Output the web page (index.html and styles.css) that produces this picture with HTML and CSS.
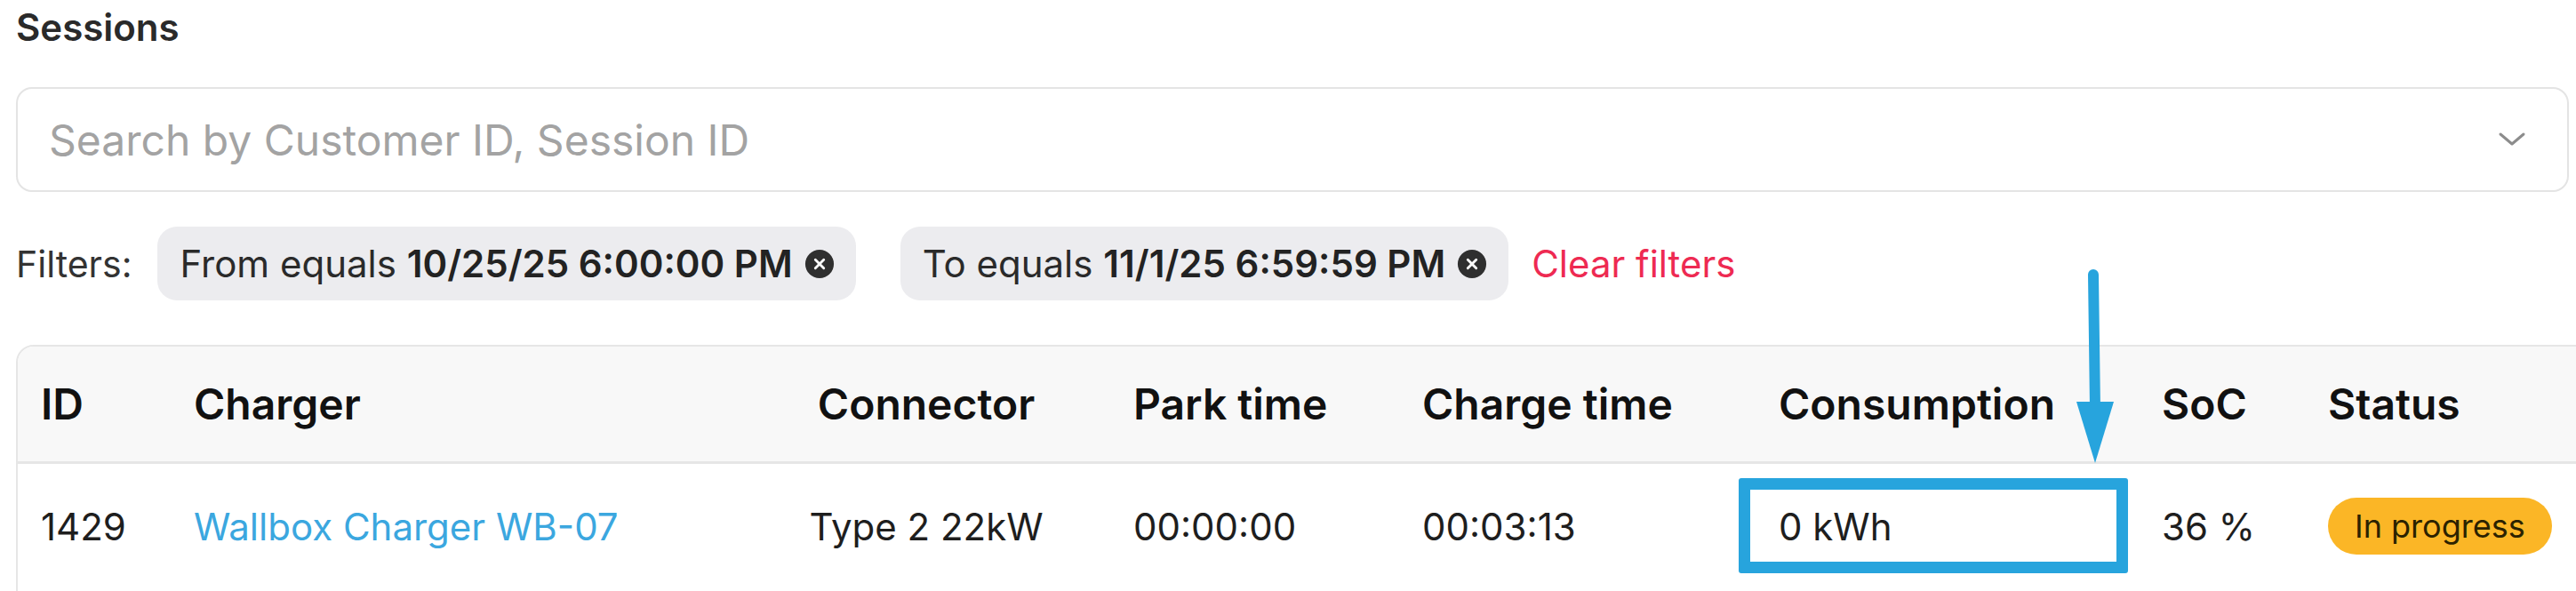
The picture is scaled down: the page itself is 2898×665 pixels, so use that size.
FILE: index.html
```html
<!DOCTYPE html>
<html lang="en">
<head>
    <meta charset="UTF-8">
    <meta name="viewport" content="width=device-width, initial-scale=1.0">
    <link rel="stylesheet" href="styles.css">
    <title>Sessions</title>
</head>
<body>
    <div class="page">
        <h1 class="page-title">Sessions</h1>

        <div class="search">
            <span class="search-placeholder">Search by Customer ID, Session ID</span>
            <svg class="search-chevron" width="32" height="18" viewBox="0 0 32 18">
                <path d="M3 3 L16 14 L29 3" fill="none" stroke="#8c8c8c" stroke-width="3" stroke-linecap="round" stroke-linejoin="round"/>
            </svg>
        </div>

        <div class="filters">
            <span class="filters-label">Filters:</span>
            <span class="chip">From equals <b>10/25/25 6:00:00 PM</b>
                <span class="chip-close">
                    <svg width="34" height="34" viewBox="0 0 36 36">
                        <circle cx="18" cy="18" r="17" fill="#2f2f2f"/>
                        <path d="M13 13 L23 23 M23 13 L13 23" stroke="#fff" stroke-width="3" stroke-linecap="round"/>
                    </svg>
                </span>
            </span>
            <span class="chip">To equals <b>11/1/25 6:59:59 PM</b>
                <span class="chip-close">
                    <svg width="34" height="34" viewBox="0 0 36 36">
                        <circle cx="18" cy="18" r="17" fill="#2f2f2f"/>
                        <path d="M13 13 L23 23 M23 13 L13 23" stroke="#fff" stroke-width="3" stroke-linecap="round"/>
                    </svg>
                </span>
            </span>
            <a class="clear-filters" href="#">Clear filters</a>
        </div>

        <div class="table-wrap">
            <table class="sessions-table">
                <colgroup>
                    <col class="col-id">
                    <col class="col-charger">
                    <col class="col-connector">
                    <col class="col-park">
                    <col class="col-charge">
                    <col class="col-consumption">
                    <col class="col-soc">
                    <col class="col-status">
                </colgroup>
                <thead>
                    <tr>
                        <th>ID</th>
                        <th>Charger</th>
                        <th class="center">Connector</th>
                        <th>Park time</th>
                        <th>Charge time</th>
                        <th>Consumption</th>
                        <th>SoC</th>
                        <th>Status</th>
                    </tr>
                </thead>
                <tbody>
                    <tr>
                        <td>1429</td>
                        <td><a class="charger-link" href="#">Wallbox Charger WB-07</a></td>
                        <td class="center">Type 2 22kW</td>
                        <td>00:00:00</td>
                        <td>00:03:13</td>
                        <td>0 kWh</td>
                        <td>36 %</td>
                        <td><span class="badge-progress">In progress</span></td>
                    </tr>
                </tbody>
            </table>

            <!-- annotation over the consumption cell -->
            <div class="mark-box"></div>
            <svg class="mark-arrow" width="54" height="226" viewBox="0 0 54 226">
                <path d="M25 9 L27 160" stroke="#27a4dd" stroke-width="12" stroke-linecap="round"/>
                <polygon points="6,152 48,152 27,221" fill="#27a4dd"/>
            </svg>
        </div>
    </div>
</body>
</html>
```

FILE: styles.css
```css
*{
    margin:0px;
    padding:0px;
    box-sizing: border-box;
}
html{
    overflow: hidden;
}
body{
    font-family: Inter, "Noto Sans", sans-serif;
    color: #222;
    background: #fff;
}
.page{
    padding-left: 18px;
}
.page-title{
    margin-top: 7px;
    font-size: 42px;
    line-height: 48px;
    font-weight: 600;
    color: #2a2a2a;
}
.search{
    margin-top: 43px;
    height: 118px;
    width: 2872px;
    border: 2px solid #e4e4e4;
    border-radius: 18px;
    display: flex;
    align-items: center;
    justify-content: space-between;
    padding: 0 46px 0 35px;
}
.search-placeholder{
    font-size: 48px;
    color: #a3a3a3;
}
.filters{
    margin-top: 39px;
    display: flex;
    align-items: center;
    font-size: 41px;
}
.filters-label{
    color: #333;
    margin-right: 29px;
}
.chip{
    display: flex;
    align-items: center;
    height: 83px;
    padding: 0 24px 0 25px;
    border-radius: 22px;
    background-color: #ececef;
    color: #2a2a2a;
    font-size: 42px;
    white-space: pre;
    margin-right: 50px;
}
.chip b{
    font-weight: 600;
    color: #222;
}
.chip-close{
    display: flex;
    margin-left: 13px;
}
.chip + .chip + .clear-filters{
    margin-left: -24px;
}
.clear-filters{
    color: #ee2a52;
    font-size: 42px;
    text-decoration: none;
}
.table-wrap{
    position: relative;
    margin-top: 50px;
    width: 2900px;
    border: 2px solid #e6e6e6;
    border-radius: 20px 0 0 0;
}
.sessions-table{
    width: 100%;
    table-layout: fixed;
    border-collapse: separate;
    border-spacing: 0;
}
.col-id{ width: 172px; }
.col-charger{ width: 643px; }
.col-connector{ width: 414px; }
.col-park{ width: 325px; }
.col-charge{ width: 401px; }
.col-consumption{ width: 431px; }
.col-soc{ width: 187px; }
.sessions-table th{
    height: 132px;
    background-color: #f8f8f8;
    border-bottom: 3px solid #e6e6e6;
    text-align: left;
    padding-left: 26px;
    font-size: 48px;
    font-weight: 600;
    color: #111;
    white-space: nowrap;
}
.sessions-table th:first-child{
    border-top-left-radius: 18px;
}
.sessions-table td{
    height: 140px;
    padding: 0 0 10px 26px;
    font-size: 42px;
    color: #1e1e1e;
    white-space: nowrap;
}
.sessions-table tbody td{
    height: 150px;
}
.sessions-table .center{
    text-align: center;
    padding-left: 0;
}
.charger-link{
    color: #3ba7df;
    text-decoration: none;
}
.badge-progress{
    display: inline-block;
    height: 64px;
    line-height: 64px;
    padding: 0 30px;
    border-radius: 32px;
    background-color: #fbb626;
    color: #2b2200;
    font-size: 36px;
    font-weight: 400;
}
.mark-box{
    position: absolute;
    left: 1936px;
    top: 148px;
    width: 438px;
    height: 107px;
    border: 13px solid #27a4dd;
    border-radius: 3px;
}
.mark-arrow{
    position: absolute;
    left: 2310px;
    top: -90px;
}
```
